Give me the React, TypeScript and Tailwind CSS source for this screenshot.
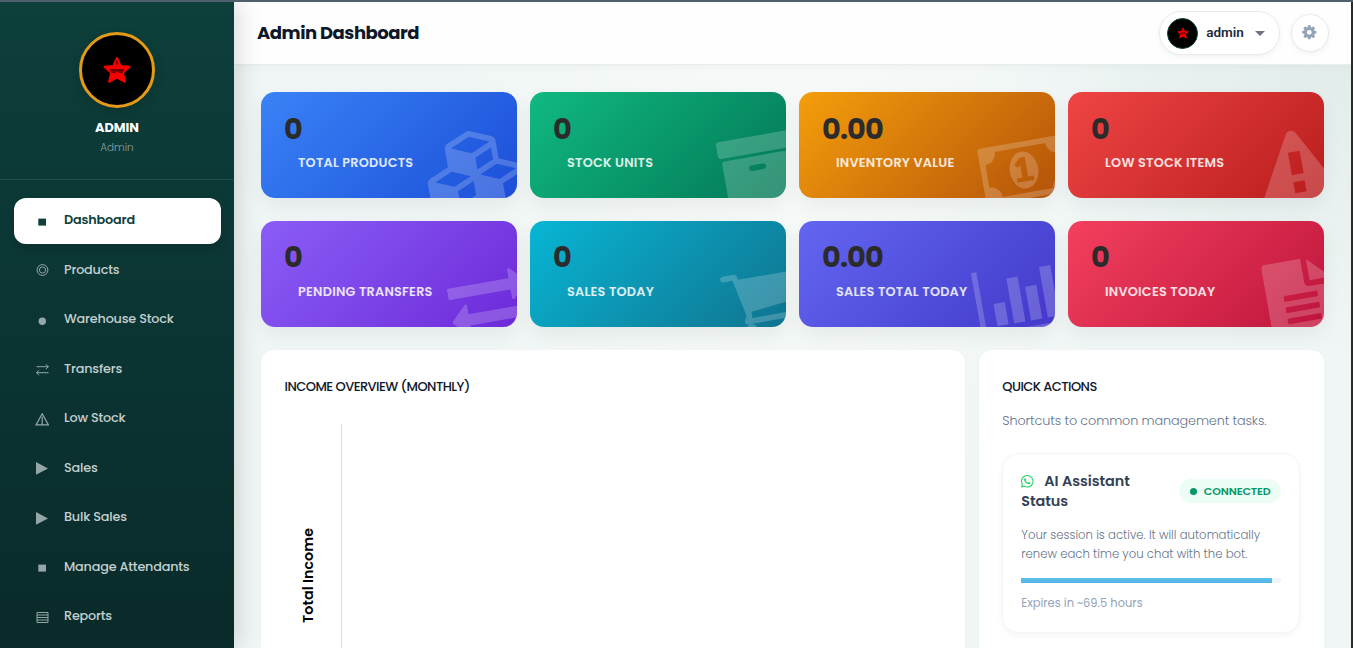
import React, { useState } from "react";
import { FaWhatsapp } from "react-icons/fa";

interface GlyphProps {
  d: string;
  box?: string;
  className?: string;
}

const Glyph = ({ d, box = "0 0 1792 1792", className = "" }: GlyphProps) => (
  <svg viewBox={box} fill="currentColor" className={className} aria-hidden="true">
    <path d={d} />
  </svg>
);

const icons = {
  cubes:
    "M640 1632l384-192v-314l-384 164v342zm-64-454l404-173-404-173-404 173zm1088 454l384-192v-314l-384 164v342zm-64-454l404-173-404-173-404 173zm-448-293l384-165v-266l-384 164v267zm-64-379l441-189-441-189-441 189zm1088 518v416q0 36-19 67t-52 47l-448 224q-25 14-57 14t-57-14l-448-224q-4-2-7-4-2 2-7 4l-448 224q-25 14-57 14t-57-14l-448-224q-33-16-52-47t-19-67v-416q0-38 21.5-70t56.5-48l434-186v-400q0-38 21.5-70t56.5-48l448-192q23-10 50-10t50 10l448 192q35 16 56.5 48t21.5 70v400l434 186q36 16 57 48t21 70z",
  archive:
    "M1088 832q0-26-19-45t-45-19h-256q-26 0-45 19t-19 45 19 45 45 19h256q26 0 45-19t19-45zm576-192v960q0 26-19 45t-45 19h-1408q-26 0-45-19t-19-45v-960q0-26 19-45t45-19h1408q26 0 45 19t19 45zm64-448v256q0 26-19 45t-45 19h-1536q-26 0-45-19t-19-45v-256q0-26 19-45t45-19h1536q26 0 45 19t19 45z",
  money:
    "M768 1152h384v-96h-128v-448h-114l-148 137 77 80q42-37 55-57h2v288h-128v96zm512-256q0 70-21 142t-59.5 134-101.5 101-138 39-138-39-101.5-101-59.5-134-21-142 21-142 59.5-134 101.5-101 138-39 138 39 101.5 101 59.5 134 21 142zm512 256v-512q-106 0-181-75t-75-181h-1152q0 106-75 181t-181 75v512q106 0 181 75t75 181h1152q0-106 75-181t181-75zm128-832v1152q0 26-19 45t-45 19h-1792q-26 0-45-19t-19-45v-1152q0-26 19-45t45-19h1792q26 0 45 19t19 45z",
  warning:
    "M1024 1400v-250h-256v250zm6-410v-510h-268v510zm-22-923l768 1408q35 63-2 126-17 29-46.5 46t-63.5 17h-1536q-34 0-63.500-17t-46.500-46q-37-63-2-126l768-1408q17-31 47-49t65-18 65 18 47 49z",
  exchange:
    "M1792 1184v192q0 13-9.5 22.5t-22.5 9.5h-1376v192q0 13-9.5 22.5t-22.5 9.5q-12 0-24-10l-319-320q-9-9-9-22 0-14 9-23l320-320q9-9 23-9 13 0 22.5 9.5t9.5 22.5v192h1376q13 0 22.5 9.5t9.5 22.5zm0-544q0 14-9 23l-320 320q-9 9-23 9-13 0-22.5-9.5t-9.5-22.5v-192h-1376q-13 0-22.5-9.5t-9.5-22.5v-192q0-13 9.5-22.5t22.5-9.5h1376v-192q0-14 9-23t23-9q12 0 24 10l319 319q9 9 9 23z",
  cart:
    "M704 1536q0 52-38 90t-90 38-90-38-38-90 38-90 90-38 90 38 38 90zm896 0q0 52-38 90t-90 38-90-38-38-90 38-90 90-38 90 38 38 90zm128-1088v512q0 24-16.5 42.5t-40.5 21.5l-1044 122q13 60 13 70 0 16-24 64h920q26 0 45 19t19 45-19 45-45 19h-1024q-26 0-45-19t-19-45q0-11 8-31.5t16-36 21.5-40 15.5-29.5l-177-823h-204q-26 0-45-19t-19-45 19-45 45-19h256q16 0 28.5 6.5t19.5 15.5 13 24.5 8 26 5.5 29.5 4.5 26h1201q26 0 45 19t19 45z",
  chart:
    "M640 896v512h-256v-512h256zm384-512v1024h-256v-1024h256zm1024 1152v128h-2048v-1536h128v1408h1920zm-640-896v768h-256v-768h256zm384-384v1152h-256v-1152h256z",
  file:
    "M1596 476q14 14 28 36h-472v-472q22 14 36 28zm-476 164h544v1056q0 40-28 68t-68 28h-1344q-40 0-68-28t-28-68v-1600q0-40 28-68t68-28h800v544q0 40 28 68t68 28zm160 736v-64q0-14-9-23t-23-9h-704q-14 0-23 9t-9 23v64q0 14 9 23t23 9h704q14 0 23-9t9-23zm0-256v-64q0-14-9-23t-23-9h-704q-14 0-23 9t-9 23v64q0 14 9 23t23 9h704q14 0 23-9t9-23zm0-256v-64q0-14-9-23t-23-9h-704q-14 0-23 9t-9 23v64q0 14 9 23t23 9h704q14 0 23-9t9-23z",
  cog:
    "M1152 896q0-106-75-181t-181-75-181 75-75 181 75 181 181 75 181-75 75-181zm512-109v222q0 12-8 23t-20 13l-185 28q-19 54-39 91 35 50 107 138 10 12 10 25t-9 23q-27 37-99 108t-94 71q-12 0-26-9l-138-108q-44 23-91 38-16 136-29 186-7 28-36 28h-222q-14 0-24.5-8.5t-11.5-21.5l-28-184q-49-16-90-37l-141 107q-10 9-25 9-14 0-25-11-126-114-165-168-7-10-7-23 0-12 8-23 15-21 51-66.5t54-70.5q-27-50-41-99l-183-27q-13-2-21-12.5t-8-23.5v-222q0-12 8-23t19-13l186-28q14-46 39-92-40-57-107-138-10-12-10-24 0-10 9-23 26-36 98.5-107.5t94.5-71.5q13 0 26 10l138 107q44-23 91-38 16-136 29-186 7-28 36-28h222q14 0 24.5 8.5t11.5 21.5l28 184q49 16 90 37l142-107q9-9 24-9 13 0 25 10 129 119 165 170 7 8 7 22 0 12-8 23-15 21-51 66.5t-54 70.5q26 50 41 98l183 28q13 2 21 12.5t8 23.5z",
};

// 14x14 menu markers
const markers: Record<string, React.ReactNode> = {
  square: <rect x="3.3" y="3.6" width="7.7" height="7" fill="currentColor" />,
  rings: (
    <g fill="none" stroke="currentColor">
      <circle cx="7.5" cy="6" r="5.4" />
      <circle cx="7.5" cy="6" r="3.1" />
    </g>
  ),
  dot: <circle cx="7.3" cy="7.2" r="3.7" fill="currentColor" />,
  arrows: (
    <g fill="none" stroke="currentColor">
      <path d="M1.500 3.700h12M10.800 1.200l2.500 2.500-2.500 2.500M13.500 9.700h-12M4 7.200l-2.500 2.500 2.500 2.500" />
    </g>
  ),
  alert: (
    <g fill="none" stroke="currentColor" strokeWidth="1.200">
      <path d="M7.200 .7L1 11.900h12.400zM7.200 3.700v8" />
    </g>
  ),
  play: <path d="M1 0v12.800L13 6.400z" fill="currentColor" />,
  list: (
    <g fill="none" stroke="currentColor">
      <path d="M2 1.500h11v10h-11zM2 4h11M2 6.500h11M2 9h11" />
    </g>
  ),
};

const menu = [
  { label: "Dashboard", marker: "square" },
  { label: "Products", marker: "rings" },
  { label: "Warehouse Stock", marker: "dot" },
  { label: "Transfers", marker: "arrows" },
  { label: "Low Stock", marker: "alert" },
  { label: "Sales", marker: "play" },
  { label: "Bulk Sales", marker: "play" },
  { label: "Manage Attendants", marker: "square" },
  { label: "Reports", marker: "list" },
];

const stats = [
  { value: "0", label: "TOTAL PRODUCTS", icon: icons.cubes, box: "0 0 2304 1792", width: "w-[103px] -right-[12px]", color: "from-[#3b82f6] to-[#1d4ed8]" },
  { value: "0", label: "STOCK UNITS", icon: icons.archive, box: "0 0 1792 1792", width: "w-20 -right-[12px]", color: "from-[#10b981] to-[#047857]" },
  { value: "0.00", label: "INVENTORY VALUE", icon: icons.money, box: "0 0 1920 1792", width: "w-[86px] -right-[12px]", color: "from-[#f59e0b] to-[#b45309]" },
  { value: "0", label: "LOW STOCK ITEMS", icon: icons.warning, box: "0 0 1792 1792", width: "w-20 -right-[13px]", color: "from-[#ef4444] to-[#b91c1c]" },
  { value: "0", label: "PENDING TRANSFERS", icon: icons.exchange, box: "0 0 1792 1792", width: "w-20 -right-[12px]", color: "from-[#8b5cf6] to-[#6d28d9]" },
  { value: "0", label: "SALES TODAY", icon: icons.cart, box: "64 0 1664 1792", width: "w-[74.300px] -right-[12px]", color: "from-[#06b6d4] to-[#0e7490]" },
  { value: "0.00", label: "SALES TOTAL TODAY", icon: icons.chart, box: "0 0 2048 1792", width: "w-[91px] -right-[12px]", color: "from-[#6366f1] to-[#4338ca]" },
  { value: "0", label: "INVOICES TODAY", icon: icons.file, box: "128 0 1536 1792", width: "w-[68.600px] -right-[12px]", color: "from-[#f43f5e] to-[#be123c]" },
];

const Star = ({ className }: { className: string }) => (
  <svg viewBox="0 0 28 28" className={className} aria-hidden="true">
    <path
      d="M14 2l3.6 8 8.9.8-6.6 6 2 9L14 21.500l-7.900 4.300 2-9-6.600-6 8.900-.8z"
      fill="#f80000"
      stroke="#f80000"
      strokeWidth="2"
      strokeLinejoin="round"
    />
    <path d="M7 13h14v1.500l-1.500 2.500h-4l-1.500-2-1.500 2h-4L7 14.500z" fill="#7a0000" />
    <path d="M14 4.500v4" stroke="#8a0000" strokeWidth="2" />
  </svg>
);

const Sidebar = () => {
  const [active, setActive] = useState("Dashboard");

  return (
    <aside className="relative z-10 flex w-[234px] shrink-0 flex-col bg-linear-to-b from-[#0d3f3b] to-[#092b2a] shadow-[4px_0_24px_rgba(0,0,0,0.15)]">
      <div className="flex h-[178px] flex-col items-center border-b border-white/10 pt-[30px]">
        <div className="flex size-[76px] items-center justify-center rounded-full border-3 border-[#e39a17] bg-black shadow-[0_4px_12px_rgba(0,0,0,0.15)]">
          <Star className="size-7" />
        </div>
        <p className="mt-3 text-[12.800px] leading-4 font-bold text-white">ADMIN</p>
        <p className="mt-1 text-[10.400px] leading-4 font-light text-[#8ba0a2]">Admin</p>
      </div>
      <nav className="flex flex-col gap-[3.500px] px-[14px] pt-[18px]">
        {menu.map((item) => (
          <button
            key={item.label}
            onClick={() => setActive(item.label)}
            className={`flex h-[46px] w-[207px] shrink-0 items-center rounded-xl pb-[2.500px] pl-[21px] text-left text-[12.800px] tracking-[-0.190px] whitespace-nowrap ${
              active === item.label
                ? "bg-white font-semibold text-[#0f3f3b] shadow-[0_4px_12px_rgba(0,0,0,0.15)]"
                : "font-medium text-[#c3cfd0]"
            }`}
          >
            <svg viewBox="0 0 14 14" className={`mt-[3.500px] mr-[15px] size-[14px] ${active === item.label ? "" : "opacity-75"}`}>
              {markers[item.marker]}
            </svg>
            <span>{item.label}</span>
          </button>
        ))}
      </nav>
    </aside>
  );
};

const Header = () => (
  <header className="flex h-[63px] shrink-0 items-center justify-between border-b border-[#e8ecec] bg-[#fefefe] pr-[22px] pl-[23px] shadow-[0_2px_8px_rgba(0,0,0,0.03)]">
    <h1 className="pb-[2px] text-[18px] font-bold tracking-[-0.470px] text-[#0f172a]">Admin Dashboard</h1>
    <div className="flex items-center gap-[11px]">
      <button className="flex h-11 w-[121px] items-center rounded-full border border-[#e8eaed] bg-white pl-[7px] shadow-[0_2px_6px_rgba(0,0,0,0.05)]">
        <span className="flex size-[31px] items-center justify-center rounded-full border border-[#0f3f3b] bg-black">
          <Star className="size-3" />
        </span>
        <span className="ml-2 w-[38px] pb-px font-[Roboto,sans-serif] text-[13.500px] font-semibold text-[#1e293b]">admin</span>
        <svg viewBox="0 0 10 5" className="ml-[11px] h-[5px] w-[10px] fill-[#6b7280]">
          <path d="M0 0h10L5 5z" />
        </svg>
      </button>
      <button className="flex size-[38px] items-center justify-center rounded-full border border-[#e8eaed] bg-white pr-px pb-px text-[#94a3b8] shadow-[0_2px_6px_rgba(0,0,0,0.05)]">
        <Glyph d={icons.cog} className="size-[16.500px] shrink-0" />
      </button>
    </div>
  </header>
);

const QuickActions = () => (
  <section className="h-[400px] w-[345px] shrink-0 rounded-xl bg-white pt-[27px] pl-[23.300px] shadow-[0_0_1px_rgba(15,63,59,0.1)]">
    <h2 className="text-[13px] leading-5 font-medium tracking-[-0.550px] text-[#0f172a]">QUICK ACTIONS</h2>
    <p className="mt-[14px] text-[12.800px] leading-5 font-light tracking-[-0.120px] whitespace-nowrap text-[#64748b]">
      Shortcuts to common management tasks.
    </p>
    <div className="mt-[22px] h-[180px] w-[297.500px] rounded-2xl border border-[#f1f5f9] bg-white px-[18px] pt-[17px] shadow-[0_3px_6px_rgba(0,0,0,0.04)]">
      <div className="flex items-center justify-between">
        <h3 className="w-[140px] text-[14.400px] leading-5 font-semibold tracking-[-0.050px] text-[#334155]">
          <FaWhatsapp className="mr-[9.500px] mb-[2px] -ml-px inline size-[14.500px] text-[#25d366]" />
          AI Assistant Status
        </h3>
        <span className="mt-px flex h-6 w-[102px] items-center gap-[7px] rounded-full bg-[#ecfdf5] pl-[11px] text-[11px] font-semibold tracking-[-0.100px] text-[#059669]">
          <span className="size-[7px] shrink-0 rounded-full bg-[#059669]" />
          CONNECTED
        </span>
      </div>
      <p className="mt-[15px] text-[11.700px] leading-[19px] font-light whitespace-nowrap text-[#64748b]">
        Your session is active. It will automatically
        <br />
        renew each time you chat with the bot.
      </p>
      <div className="mt-[14px] h-[5px] bg-[#f1f5f9]">
        <div className="h-full w-[251px] bg-linear-to-b from-[#5bc0eb] to-[#55b5ea]" />
      </div>
      <p className="mt-[10px] text-[11.500px] leading-5 text-[#94a3b8]">Expires in ~69.5 hours</p>
    </div>
  </section>
);

const App = () => (
  <div className="flex h-[648px] w-[1353px] flex-col overflow-hidden border-t-2 border-[#4f5f6b] font-[Poppins,Inter,sans-serif]">
    <div className="flex min-h-0 flex-1 border-r-2 border-[#2b2b2b]">
      <Sidebar />
      <div className="flex min-w-0 flex-1 flex-col bg-[#f0f6f5] bg-[radial-gradient(circle_at_100%_0%,#dfebe9_0%,transparent_28%),radial-gradient(circle_at_50%_20%,#f6faf9_0%,transparent_50%)]">
        <Header />
        <main className="flex flex-col pt-[27.400px] pl-[27px]">
          <div className="grid w-[1063px] grid-cols-4 gap-x-[13px] gap-y-[22.500px]">
            {stats.map((stat) => (
              <div
                key={stat.label}
                className={`relative h-[106px] overflow-hidden rounded-[14px] bg-linear-135 pt-[18.200px] pl-[23px] shadow-[0_8px_20px_rgba(0,0,0,0.06)] ${stat.color}`}
              >
                <p className="text-[28.800px] leading-9 font-bold tracking-[-0.900px] text-[#2b2b2b]">{stat.value}</p>
                <p className="mt-[6.800px] pl-[14px] text-[12.800px] leading-5 font-semibold tracking-[0.240px] whitespace-nowrap text-white/85">
                  {stat.label}
                </p>
                <Glyph
                  d={stat.icon}
                  box={stat.box}
                  className={`absolute -bottom-[12px] h-20 -rotate-10 text-white/20 ${stat.width}`}
                />
              </div>
            ))}
          </div>
          <div className="mt-[23.100px] flex gap-[14px]">
            <section className="h-[400px] w-[704px] shrink-0 rounded-xl bg-white px-[23.500px] pt-[27px] shadow-[0_0_1px_rgba(15,63,59,0.1)]">
              <h2 className="text-[13px] leading-5 font-medium tracking-[-0.530px] text-[#0f172a]">
                INCOME OVERVIEW (MONTHLY)
              </h2>
              <div className="mt-[27px] flex h-[302px]">
                <div className="flex w-[56.500px] items-center justify-center pr-[9px]">
                  <span className="rotate-180 text-[14.300px] font-semibold whitespace-nowrap text-black [writing-mode:vertical-rl]">
                    Total Income
                  </span>
                </div>
                <div className="flex-1 border-l border-[#dddddd]" />
              </div>
            </section>
            <QuickActions />
          </div>
        </main>
      </div>
    </div>
  </div>
);

export default App;
